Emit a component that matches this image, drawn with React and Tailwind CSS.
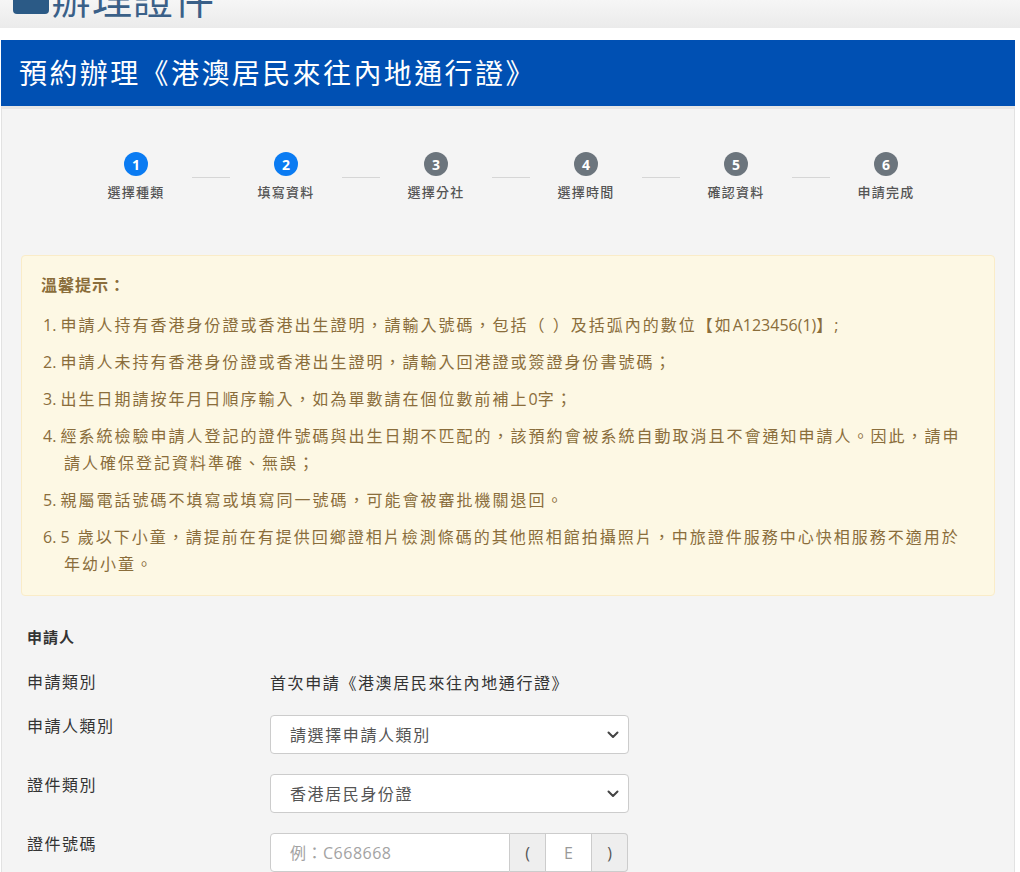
// App.jsx
const FONT = { fontFamily: '"Open Sans", "Noto Sans CJK TC", sans-serif' }

const steps = [
  { n: 1, label: '選擇種類', active: true },
  { n: 2, label: '填寫資料', active: true },
  { n: 3, label: '選擇分社' },
  { n: 4, label: '選擇時間' },
  { n: 5, label: '確認資料' },
  { n: 6, label: '申請完成' },
]

const Latin = ({ children }) => <span className="tracking-normal">{children}</span>

const tips = [
  <>申請人持有香港身份證或香港出生證明，請輸入號碼，包括（ ）及括弧內的數位【如<Latin>A123456(1)</Latin>】;</>,
  '申請人未持有香港身份證或香港出生證明，請輸入回港證或簽證身份書號碼；',
  <>出生日期請按年月日順序輸入，如為單數請在個位數前補上<Latin>0</Latin>字；</>,
  '經系統檢驗申請人登記的證件號碼與出生日期不匹配的，該預約會被系統自動取消且不會通知申請人。因此，請申請人確保登記資料準確、無誤；',
  '親屬電話號碼不填寫或填寫同一號碼，可能會被審批機關退回。',
  '5 歲以下小童，請提前在有提供回鄉證相片檢測條碼的其他照相館拍攝照片，中旅證件服務中心快相服務不適用於年幼小童。',
]

function Chevron() {
  return (
    <svg width="12" height="8" viewBox="0 0 12 8" className="shrink-0">
      <polyline points="1.5,1.5 6,6 10.5,1.5" fill="none" stroke="#444" strokeWidth="2" strokeLinecap="round" strokeLinejoin="round" />
    </svg>
  )
}

function Select({ value }) {
  return (
    <div className="flex h-[39px] w-[359px] items-center justify-between rounded-[4px] border border-[#ccc] bg-white pl-[19px] pr-[9px]">
      <span className="text-[16px] tracking-[1.6px] text-[#555]">{value}</span>
      <Chevron />
    </div>
  )
}

// label column + field column
const Row = ({ label, children, className = '' }) => (
  <div className={`flex items-start ${className}`}>
    <div className="w-[243px] shrink-0 text-[16px] leading-[22px] tracking-[1.5px] text-[#333]">{label}</div>
    <div className="flex-1">{children}</div>
  </div>
)

export default function App() {
  return (
    <div className="min-h-screen bg-white" style={FONT}>
      <div className="h-[28px] overflow-hidden bg-gradient-to-b from-[#f6f6f6] to-[#ebebeb]">
        <div className="-mt-[22px] flex items-end pl-[13px]">
          <div className="h-[36px] w-[36px] rounded-[4px] bg-[#2b5a86]" />
          <div className="-mb-[5px] ml-[2px] text-[40px] leading-[40px] tracking-[1px] text-[#3a6088]">辦理證件</div>
        </div>
      </div>

      <div className="ml-[1px] mt-[12px] w-[1014px]">
        {/* banner */}
        <div className="flex h-[66px] items-center bg-[#0050b3] pl-[18px]">
          <h1 className="text-[28px] tracking-[2.4px] text-white">預約辦理《港澳居民來往內地通行證》</h1>
        </div>

        <div className="border-x border-t-[3px] border-x-[#e2e2e2] border-t-[#e6e6e6] bg-[#f4f4f4] px-[19px] pb-[40px]">
          {/* steps */}
          <div className="flex pl-[59px] pt-[43px]">
            {steps.map((s, i) => (
              <div key={s.n} className="flex">
                <div className="flex w-[112px] flex-col items-center">
                  <div
                    className={`flex h-[24px] w-[24px] items-center justify-center rounded-full text-[14px] font-bold text-white ${
                      s.active ? 'bg-[#0a7bf2]' : 'bg-[#6c757d]'
                    }`}
                  >
                    {s.n}
                  </div>
                  <div className="mt-[6px] text-[13px] font-medium leading-[20px] tracking-[1.3px] text-[#555]">{s.label}</div>
                </div>
                {i < steps.length - 1 && <div className="mt-[25px] h-px w-[38px] bg-[#d6d6d6]" />}
              </div>
            ))}
          </div>

          {/* notice */}
          <div className="mt-[53px] rounded-[4px] border border-[#faecc8] bg-[#fdf8e4] pb-[17px] pl-[19px] pr-[21px] pt-[16px] text-[#8a6d3b]">
            <div className="text-[16px] font-bold leading-[27px] tracking-[1px]">溫馨提示：</div>
            <ol className="mt-[13px] flex flex-col gap-[10px] pl-[23px]">
              {tips.map((t, i) => (
                <li key={i} className="-indent-[21px] text-[16px] leading-[27px] tracking-[2px]">
                  <span className="tracking-normal">{i + 1}. </span>
                  {t}
                </li>
              ))}
            </ol>
          </div>

          {/* form */}
          <div className="pl-[6px] pt-[30px]">
            <div className="text-[15px] font-bold leading-[22px] tracking-[1px] text-[#333]">申請人</div>

            <Row label="申請類別" className="mt-[23px]">
              <span className="text-[16px] leading-[22px] tracking-[1.6px] text-[#333]">首次申請《港澳居民來往內地通行證》</span>
            </Row>

            <Row label="申請人類別" className="mt-[20px]">
              <Select value="請選擇申請人類別" />
            </Row>

            <Row label="證件類別" className="mt-[20px]">
              <Select value="香港居民身份證" />
            </Row>

            <Row label="證件號碼" className="mt-[20px]">
              <div className="flex h-[39px] w-[358px]">
                <div className="flex w-[240px] items-center rounded-l-[4px] border border-[#ccc] bg-white pl-[19px] text-[16px] tracking-[0.5px] text-[#a3a3a3]">
                  例：C668668
                </div>
                <div className="flex w-[35px] items-center justify-center border-y border-[#ccc] bg-[#eee] text-[16px] text-[#555]">(</div>
                <div className="flex w-[47px] items-center justify-center border border-[#ccc] bg-white text-[16px] text-[#999]">E</div>
                <div className="flex w-[36px] items-center justify-center rounded-r-[4px] border-y border-r border-[#ccc] bg-[#eee] text-[16px] text-[#555]">)</div>
              </div>
            </Row>
          </div>
        </div>
      </div>
    </div>
  )
}
